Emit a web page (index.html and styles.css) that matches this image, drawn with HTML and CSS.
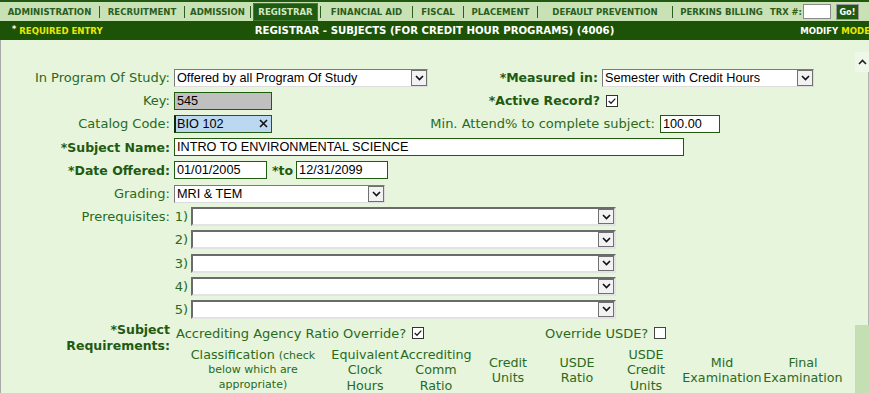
FILE: index.html
```html
<!DOCTYPE html>
<html>
<head>
<meta charset="utf-8">
<title>Registrar - Subjects</title>
<link rel="stylesheet" href="styles.css">
</head>
<body>
<div class="topnav">
  <div class="navcell">ADMINISTRATION</div>
  <div class="navcell">RECRUITMENT</div>
  <div class="navcell">ADMISSION</div>
  <div class="navcell"><span class="tabbox">REGISTRAR</span></div>
  <div class="navcell">FINANCIAL AID</div>
  <div class="navcell">FISCAL</div>
  <div class="navcell">PLACEMENT</div>
  <div class="navcell">DEFAULT PREVENTION</div>
  <div class="navcell">PERKINS BILLING</div>
  <div class="trx"><span class="trx-label">TRX #:</span><input class="trx-input" type="text"><button class="go">Go!</button></div>
</div>
<div class="titlebar">
  <span class="req"><span class="star">*</span> REQUIRED ENTRY</span>
  <span class="title">REGISTRAR - SUBJECTS (FOR CREDIT HOUR PROGRAMS) (4006)</span>
  <span class="mode">MODIFY <span class="yel">MODE</span></span>
</div>
<div class="frame">
  <div class="content">
    <div class="row">
      <label class="lbl">In Program Of Study:</label>
      <div class="sel sel-classic w-prog"><span class="sel-text">Offered by all Program Of Study</span><span class="sel-btn"><svg width="9" height="6" viewBox="0 0 9 6"><path d="M1 1 L4.5 4.5 L8 1" stroke="#111" stroke-width="1.6" fill="none"/></svg></span></div>
      <label class="rlbl rlbl-measured b">*Measured in:</label>
      <div class="sel sel-classic w-measured"><span class="sel-text">Semester with Credit Hours</span><span class="sel-btn"><svg width="9" height="6" viewBox="0 0 9 6"><path d="M1 1 L4.5 4.5 L8 1" stroke="#111" stroke-width="1.6" fill="none"/></svg></span></div>
    </div>
    <div class="row">
      <label class="lbl">Key:</label>
      <input class="inp w-short inp-key" type="text" value="545">
      <label class="rlbl rlbl-active b">*Active Record?</label>
      <svg class="cb cb-active" width="12" height="12" viewBox="0 0 12 12"><rect x="0.5" y="0.5" width="11" height="11" fill="#fff" stroke="#333"/><path d="M2.7 6 L5 8.3 L9.3 3.6" fill="none" stroke="#222" stroke-width="1.3"/></svg>
    </div>
    <div class="row">
      <label class="lbl">Catalog Code:</label>
      <div class="catalog w-short"><input class="bare" type="text" value="BIO 102"><svg class="clear" width="9" height="9" viewBox="0 0 9 9"><path d="M1 1 L8 8 M8 1 L1 8" stroke="#111" stroke-width="1.6"/></svg></div>
      <label class="rlbl rlbl-attend">Min. Attend% to complete subject:</label>
      <input class="inp w-attend" type="text" value="100.00">
    </div>
    <div class="row">
      <label class="lbl b">*Subject Name:</label>
      <input class="inp w-name" type="text" value="INTRO TO ENVIRONMENTAL SCIENCE">
    </div>
    <div class="row">
      <label class="lbl b">*Date Offered:</label>
      <input class="inp w-date1" type="text" value="01/01/2005">
      <span class="to b">*to</span>
      <input class="inp w-date2" type="text" value="12/31/2099">
    </div>
    <div class="row">
      <label class="lbl">Grading:</label>
      <div class="sel sel-classic w-grading"><span class="sel-text">MRI &amp; TEM</span><span class="sel-btn"><svg width="9" height="6" viewBox="0 0 9 6"><path d="M1 1 L4.5 4.5 L8 1" stroke="#111" stroke-width="1.6" fill="none"/></svg></span></div>
    </div>
    <div class="row">
      <label class="lbl">Prerequisites:</label>
      <span class="num">1)</span>
      <div class="sel sel-pre"><span class="sel-text"></span><span class="sel-btn"><svg width="9" height="6" viewBox="0 0 9 6"><path d="M1 1 L4.5 4.5 L8 1" stroke="#111" stroke-width="1.6" fill="none"/></svg></span></div>
    </div>
    <div class="row">
      <label class="lbl"></label>
      <span class="num">2)</span>
      <div class="sel sel-pre"><span class="sel-text"></span><span class="sel-btn"><svg width="9" height="6" viewBox="0 0 9 6"><path d="M1 1 L4.5 4.5 L8 1" stroke="#111" stroke-width="1.6" fill="none"/></svg></span></div>
    </div>
    <div class="row">
      <label class="lbl"></label>
      <span class="num">3)</span>
      <div class="sel sel-pre"><span class="sel-text"></span><span class="sel-btn"><svg width="9" height="6" viewBox="0 0 9 6"><path d="M1 1 L4.5 4.5 L8 1" stroke="#111" stroke-width="1.6" fill="none"/></svg></span></div>
    </div>
    <div class="row">
      <label class="lbl"></label>
      <span class="num">4)</span>
      <div class="sel sel-pre"><span class="sel-text"></span><span class="sel-btn"><svg width="9" height="6" viewBox="0 0 9 6"><path d="M1 1 L4.5 4.5 L8 1" stroke="#111" stroke-width="1.6" fill="none"/></svg></span></div>
    </div>
    <div class="row">
      <label class="lbl"></label>
      <span class="num">5)</span>
      <div class="sel sel-pre"><span class="sel-text"></span><span class="sel-btn"><svg width="9" height="6" viewBox="0 0 9 6"><path d="M1 1 L4.5 4.5 L8 1" stroke="#111" stroke-width="1.6" fill="none"/></svg></span></div>
    </div>
    <div class="subreq">
      <label class="lbl b subreq-lbl">*Subject<br>Requirements:</label>
      <div class="subreq-body">
        <div class="acc-line">
          <span class="chk-group">Accrediting Agency Ratio Override?
            <svg class="cb" width="12" height="12" viewBox="0 0 12 12"><rect x="0.5" y="0.5" width="11" height="11" fill="#fff" stroke="#333"/><path d="M2.7 6 L5 8.3 L9.3 3.6" fill="none" stroke="#222" stroke-width="1.3"/></svg></span>
          <span class="chk-group">Override USDE?
            <svg class="cb" width="12" height="12" viewBox="0 0 12 12"><rect x="0.5" y="0.5" width="11" height="11" fill="#fff" stroke="#444"/></svg></span>
        </div>
        <div class="req-table">
          <div class="th th-class"><div>Classification <span class="small">(check</span></div><div class="small">below which are</div><div class="small">appropriate)</div></div>
          <div class="th">Equivalent Clock Hours</div>
          <div class="th">Accrediting Comm Ratio</div>
          <div class="th">Credit Units</div>
          <div class="th">USDE Ratio</div>
          <div class="th">USDE Credit Units</div>
          <div class="th">Mid Examination</div>
          <div class="th">Final Examination</div>
        </div>
      </div>
    </div>
  </div>
  <div class="scroll">
    <div class="scroll-up"><svg width="9" height="6" viewBox="0 0 9 6"><path d="M1 5 L4.5 1.5 L8 5" stroke="#222" stroke-width="1.6" fill="none"/></svg></div>
    <div class="scroll-track"></div>
    <div class="scroll-thumb"></div>
  </div>
</div>
</body>
</html>
```
FILE: styles.css
```css
* { box-sizing: border-box; }
html, body { margin: 0; padding: 0; }
body {
  width: 869px;
  height: 393px;
  overflow: hidden;
  background: #e6f5dc;
  font-family: "DejaVu Sans", Verdana, sans-serif;
  font-size: 13px;
  color: #2a6a1c;
}

/* top navigation */
.topnav {
  height: 21px;
  border-top: 2px solid #1f5a10;
  background: #c8e2b5;
  display: grid;
  grid-template-columns: 99px 85px 66px 70px 92px 51px 74px 135px 98px 1fr;
  align-items: center;
  font-family: "DejaVu Sans Condensed", "DejaVu Sans", sans-serif;
  font-weight: bold;
  font-size: 9.5px;
  color: #2b5d1e;
}
.navcell {
  height: 12px;
  display: flex;
  align-items: center;
  justify-content: center;
  white-space: nowrap;
}
.navcell + .navcell { border-left: 1px solid #2b5d1e; }
.tabbox {
  height: 18px;
  padding: 0 4px;
  display: flex;
  align-items: center;
  background: #1f5c12;
  border: 1px solid #447a34;
  color: #d2e8c4;
}
.trx {
  display: flex;
  align-items: center;
  white-space: nowrap;
}
.trx-label { font-size: 9.3px; }
.trx-input {
  width: 28px;
  height: 15px;
  margin: 0 0 0 1px;
  border: 1px solid #8a8a8a;
  background: #fff;
  padding: 0;
}
.go {
  margin-left: 5px;
  width: 23px;
  height: 16px;
  padding: 0;
  background: #1f5a10;
  color: #fff;
  border: 1px solid #9a9a9a;
  font-family: "DejaVu Sans Condensed", "DejaVu Sans", sans-serif;
  font-weight: bold;
  font-size: 9px;
}

/* title bar */
.titlebar {
  height: 19px;
  background: #1c5307;
  display: grid;
  grid-template-columns: 1fr auto 1fr;
  align-items: center;
  font-family: "DejaVu Sans Condensed", "DejaVu Sans", sans-serif;
  font-weight: bold;
  color: #fff;
  white-space: nowrap;
}
.req { font-size: 9.5px; color: #eaea00; padding-left: 12px; }
.req .star { color: #fff; font-size: 9px; position: relative; top: -2px; }
.title { font-size: 11.3px; }
.mode { justify-self: end; font-size: 9.5px; margin-right: -1px; }
.yel { color: #eaea00; }

/* frame */
.frame {
  display: flex;
  height: 353px;
  border-left: 1px solid #a9a9a9;
}
.content { flex: 1; padding-top: 26px; }
.scroll {
  width: 14px;
  display: flex;
  flex-direction: column;
}
.scroll-up {
  margin-top: 12px;
  height: 20px;
  background: #eef7e9;
  display: flex;
  align-items: center;
  justify-content: center;
}
.scroll-track { flex: 1; border-right: 1px solid #b4b4b4; }
.scroll-thumb { height: 68px; background: #c5dfb4; }

/* rows */
.row {
  display: flex;
  align-items: center;
  height: 23.2px;
}
.lbl {
  width: 173px;
  flex: none;
  text-align: right;
  padding-right: 4px;
  white-space: nowrap;
}
.b { font-weight: bold; color: #1f5a12; font-size: 12.5px; }
.rlbl { flex: none; text-align: right; white-space: nowrap; }
.rlbl-measured { width: 174px; padding-right: 4px; }
.rlbl-active { width: 330px; padding-right: 2px; }
.rlbl-attend { width: 388px; padding-right: 5px; }
.cb { flex: none; display: block; }
.cb-active { margin-left: 4px; }

.inp {
  height: 18px;
  margin: 0;
  border: 1px solid #1f5c0f;
  padding: 0 2px;
  background: #fff;
  color: #000;
  font-family: "Liberation Sans", Arial, sans-serif;
  font-size: 12.7px;
  outline: none;
}
.inp-key { background: #c0c0c0; }
.w-short { width: 98px; }
.w-attend { width: 60px; }
.w-name { width: 510px; }
.w-date1 { width: 93px; }
.w-date2 { width: 92px; }
.to { margin: 0 3px 0 5px; }

.catalog {
  height: 18px;
  display: flex;
  align-items: center;
  border: 1px solid #1f5c0f;
  border-left: 2px solid #0d2a06;
  background: #bcd8f1;
  padding-right: 3px;
}
.bare {
  flex: 1;
  min-width: 0;
  height: 16px;
  border: 0;
  padding: 0 1px;
  margin: 0;
  background: transparent;
  color: #000;
  font-family: "Liberation Sans", Arial, sans-serif;
  font-size: 12.7px;
  outline: none;
}
.clear { flex: none; }

/* select boxes */
.sel {
  display: flex;
  align-items: stretch;
  background: #fff;
  color: #000;
  font-family: "Liberation Sans", Arial, sans-serif;
  font-size: 12.7px;
  flex: none;
}
.sel-text {
  flex: 1;
  padding-left: 2px;
  display: flex;
  align-items: center;
  white-space: nowrap;
  overflow: hidden;
}
.sel-btn {
  width: 16px;
  flex: none;
  border: 1px solid #707070;
  background: #f2f2f2;
  display: flex;
  align-items: center;
  justify-content: center;
}
.sel-classic {
  height: 18px;
  border: 1px solid;
  border-color: #7a7a7a #dcdcdc #dcdcdc #7a7a7a;
}
.w-prog { width: 254px; }
.w-measured { width: 212px; }
.w-grading { width: 211px; }
.sel-pre {
  width: 425px;
  height: 19px;
  border-style: solid;
  border-width: 2px;
  border-color: #6b6b6b #e3e3e3 #e3e3e3 #6b6b6b;
}
.num {
  width: 17px;
  flex: none;
  text-align: right;
  padding-right: 3px;
}

/* subject requirements */
.subreq {
  display: flex;
  margin-top: 1px;
}
.subreq-lbl {
  line-height: 16px;
  align-self: flex-start;
  white-space: nowrap;
}
.subreq-body {
  display: flex;
  flex-direction: column;
}
.acc-line {
  display: grid;
  grid-template-columns: 369px auto;
  height: 22px;
  padding-left: 2px;
  align-items: center;
}
.chk-group {
  display: flex;
  align-items: center;
  gap: 6px;
  white-space: nowrap;
}
.req-table {
  display: grid;
  grid-template-columns: 154px 70px 72px 72px 66px 72px 80px 82px;
  margin-left: 2px;
  margin-top: 3px;
  line-height: 15.3px;
  text-align: center;
  align-items: center;
  font-size: 12.7px;
}
.th-class { line-height: 14.5px; }
.small { font-size: 11px; }
```
